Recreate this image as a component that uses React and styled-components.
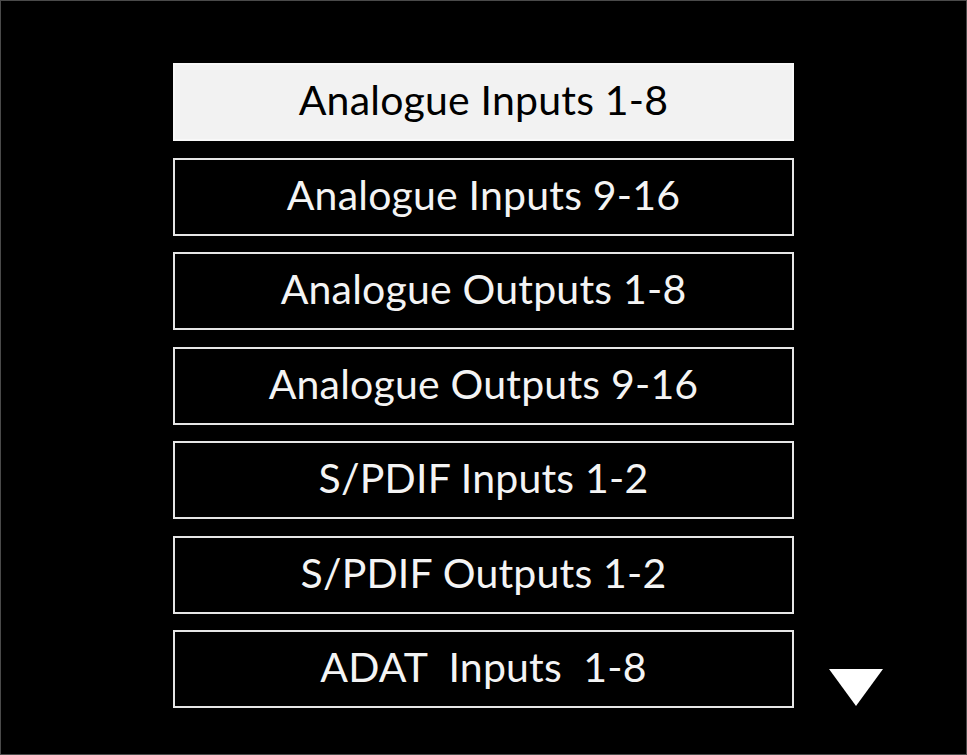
import React from "react";
import styled, { createGlobalStyle } from "styled-components";

const Global = createGlobalStyle`
  html, body { margin: 0; padding: 0; background: #000; }
  * { box-sizing: border-box; }
`;

const Screen = styled.div`
  width: 967px;
  height: 755px;
  background: #000;
  border: 1px solid #4a4a4a;
  display: grid;
  grid-template-columns: 621px 88px;
  column-gap: 34px;
  padding: 62px 0 0 172px;
  font-family: "Lato", "Open Sans", sans-serif;
`;

const List = styled.div`
  display: flex;
  flex-direction: column;
  gap: 16.5px;
`;

const Row = styled.div`
  height: 78px;
  display: flex;
  align-items: center;
  justify-content: center;
  padding-bottom: 5px;
  border: 2px solid ${(p) => (p.$active ? "#f8f8f8" : "#e6e6e6")};
  background: ${(p) => (p.$active ? "#f2f2f2" : "#000")};
  color: ${(p) => (p.$active ? "#000" : "#f4f4f4")};
  font-size: 41px;
  font-weight: 400;
  white-space: pre;
  letter-spacing: 0.2px;
`;

const Side = styled.div`
  display: flex;
  align-items: flex-end;
  padding-bottom: 47px;
`;

const Arrow = () => (
  <svg width="56" height="38" viewBox="0 0 56 38">
    <polygon points="1,0 55,0 28,37" fill="#fff" />
  </svg>
);

const items = [
  "Analogue Inputs 1-8",
  "Analogue Inputs 9-16",
  "Analogue Outputs 1-8",
  "Analogue Outputs 9-16",
  "S/PDIF Inputs 1-2",
  "S/PDIF Outputs 1-2",
  "ADAT  Inputs  1-8",
];

export default function App() {
  return (
    <>
      <Global />
      <Screen>
        <List>
          {items.map((t, i) => (
            <Row key={t} $active={i === 0}>
              {t}
            </Row>
          ))}
        </List>
        <Side>
          <Arrow />
        </Side>
      </Screen>
    </>
  );
}
